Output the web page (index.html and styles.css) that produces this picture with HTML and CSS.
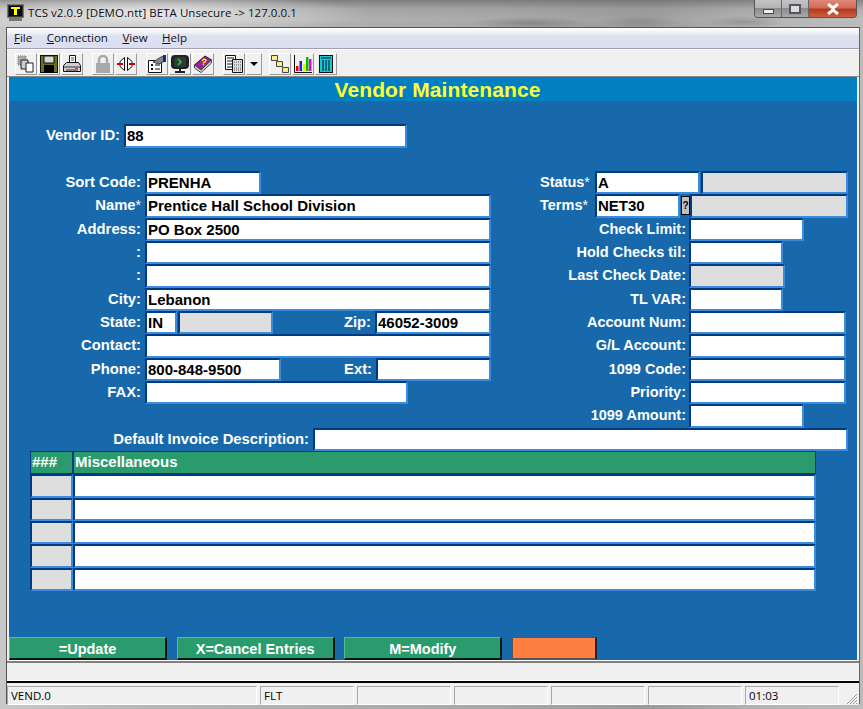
FILE: index.html
```html
<!DOCTYPE html>
<html>
    <head>
        <meta charset="utf-8">
        <title>TCS v2.0.9</title>
        <link rel="stylesheet" href="styles.css">
    </head>
    <body>
        <div class="window">
            <div class="titlebar">
                <svg class="appicon" width="17" height="18" viewBox="0 0 17 18">
                    <rect x="0.5" y="0.5" width="16" height="13" fill="#333" stroke="#777"/>
                    <rect x="2" y="2" width="13" height="10" fill="#000"/>
                    <path d="M4 3h9v2h-3v6H7V5H4z" fill="#ff0"/>
                    <rect x="2" y="14" width="13" height="3" fill="#777"/>
                </svg>
                <span class="apptitle">TCS v2.0.9 [DEMO.ntt] BETA Unsecure -&gt; 127.0.0.1</span>
                <div class="winbtns">
                    <div class="winbtn"><span class="glyph-min"></span></div>
                    <div class="winbtn"><span class="glyph-max"></span></div>
                    <div class="winbtn close">
                        <svg width="14" height="12" viewBox="0 0 14 12"><path d="M2 1l5 4 5-4M2 11l5-4 5 4M7 5v2" fill="none" stroke="#fff" stroke-width="3"/></svg>
                    </div>
                </div>
            </div>
            <div class="client">
                <div class="menubar">
                    <span><u>F</u>ile</span>
                    <span><u>C</u>onnection</span>
                    <span><u>V</u>iew</span>
                    <span><u>H</u>elp</span>
                </div>
                <div class="toolbar">
                    <div class="tool"><svg width="18" height="18" viewBox="0 0 18 18"><path d="M1 1h8v9H1z" fill="#aaa" stroke="#777" stroke-dasharray="1 1"/><path d="M4 5h7v9H4z" fill="#ccc" stroke="#222"/><path d="M9 8h7v9H9z" fill="#fff" stroke="#222"/></svg></div>
                    <div class="tool"><svg width="18" height="18" viewBox="0 0 18 18"><rect x="0.5" y="0.5" width="17" height="17" fill="#6f6f1e" stroke="#111"/><rect x="4" y="1" width="10" height="7" fill="#d8d8d8" stroke="#111"/><rect x="4" y="10" width="10" height="8" fill="#000"/></svg></div>
                    <div class="tool"><svg width="18" height="18" viewBox="0 0 18 18"><path d="M6.5 0.5h6v7h-6z" fill="#fff" stroke="#111"/><path d="M8 3h3M8 5h3" stroke="#555"/><path d="M3.5 7.5h12l2 3v6h-17v-6z" fill="#d0d0d0" stroke="#111"/><path d="M1 12h16M3 15h12" stroke="#333"/><rect x="12" y="13" width="3" height="1" fill="#d33"/></svg></div>
                    <div class="tool sep"><svg width="14" height="18" viewBox="0 0 14 18"><path d="M3 8V5a4 4 0 0 1 8 0v3" fill="none" stroke="#a8a8a8" stroke-width="2.5"/><rect x="0" y="8" width="14" height="10" fill="#a8a8a8"/></svg></div>
                    <div class="tool"><svg width="18" height="14" viewBox="0 0 18 14"><path d="M7.5 0.5L3 4.5v5l4.5 4z" fill="#fff" stroke="#111"/><path d="M10.5 0.5l4.5 4v5l-4.5 4z" fill="#fff" stroke="#111"/><rect x="0" y="6" width="6" height="2" fill="#c00"/><rect x="12" y="6" width="6" height="2" fill="#c00"/></svg></div>
                    <div class="tool sep"><svg width="18" height="18" viewBox="0 0 18 18"><path d="M0.5 5.5h13v12h-13z" fill="#fff" stroke="#111"/><path d="M3 9h2v2H3zM3 13h2v2H3z" fill="#111"/><path d="M7 10h5M7 14h5" stroke="#111"/><path d="M5 7l8-5 4-1v5l-6 3z" fill="#888" stroke="#444"/><rect x="15" y="0" width="3" height="7" fill="#0b2f8a"/></svg></div>
                    <div class="tool"><svg width="18" height="18" viewBox="0 0 18 18"><rect x="0" y="0" width="18" height="14" rx="4" fill="#222"/><rect x="3" y="2" width="12" height="10" rx="2" fill="#2c3a3a"/><path d="M7 4l3 3-3 3" fill="none" stroke="#3c3" stroke-width="1.5"/><path d="M8 14h2v2H8zM4 16h10v2H4z" fill="#222"/></svg></div>
                    <div class="tool"><svg width="18" height="18" viewBox="0 0 18 18"><path d="M0.5 10L11 1l6.5 4L7 15z" fill="#a01fa0" stroke="#311"/><path d="M0.5 10v3l6.5 4.5L17.5 8V5L7 15z" fill="#d8d8d8" stroke="#444"/><path d="M8 6l2-2 2 1-1 2-2 1M9 10l1-1" fill="none" stroke="#ff0" stroke-width="1.3"/></svg></div>
                    <div class="tool sep"><svg width="18" height="18" viewBox="0 0 18 18"><path d="M0.5 0.5h10v14h-10z" fill="#fff" stroke="#111"/><path d="M2 3h7M2 6h7M2 9h7M2 12h7" stroke="#111"/><path d="M7.5 4.5h10v13h-10z" fill="#ddd" stroke="#111"/><path d="M9 7h7M9 10h7M9 13h7M9 15h7" stroke="#555" stroke-dasharray="1 1"/></svg></div>
                    <div class="tool arrow"><span class="caret"></span></div>
                    <div class="tool sep-narrow"><svg width="18" height="18" viewBox="0 0 18 18"><path d="M3 3l12 12" stroke="#111"/><path d="M0.5 0.5h6v5h-6zM5.5 6.5h6v5h-6zM11.5 12.5h6v5h-6z" fill="#ffe98a" stroke="#444"/></svg></div>
                    <div class="tool"><svg width="18" height="18" viewBox="0 0 18 18"><path d="M0.5 0v17.5H18" fill="none" stroke="#111"/><rect x="2" y="11" width="2.5" height="5" fill="#e00"/><rect x="5.5" y="6" width="2.5" height="10" fill="#22c"/><rect x="9" y="9" width="2.5" height="7" fill="#ee0"/><rect x="12" y="2" width="2.5" height="14" fill="#0b0"/><rect x="15" y="4" width="2.5" height="12" fill="#e0e"/></svg></div>
                    <div class="tool"><svg width="14" height="18" viewBox="0 0 14 18"><rect x="0.5" y="0.5" width="13" height="17" fill="#19c8d8" stroke="#111"/><path d="M2 3h10" stroke="#111"/><path d="M4 5v11M7 5v11M10 5v11" stroke="#0a4a55" stroke-width="1.5"/></svg></div>
                </div>
                <div class="screen">
                    <div class="screen-title">Vendor Maintenance</div>
                    <div class="row"></div>
                    <div class="row">
                        <label class="lbl w-vendor">Vendor ID:</label>
                        <div class="fld f283">88</div>
                    </div>
                    <div class="row"></div>
                    <div class="columns">
                        <div class="col-left">
                            <div class="row"><label class="lbl w-left">Sort Code:</label><div class="fld f116">PRENHA</div></div>
                            <div class="row"><label class="lbl w-left">Name<sup>*</sup></label><div class="fld f346">Prentice Hall School Division</div></div>
                            <div class="row"><label class="lbl w-left">Address:</label><div class="fld f346">PO Box 2500</div></div>
                            <div class="row"><label class="lbl w-left">:</label><div class="fld f346"></div></div>
                            <div class="row"><label class="lbl w-left">:</label><div class="fld f346"></div></div>
                            <div class="row"><label class="lbl w-left">City:</label><div class="fld f346">Lebanon</div></div>
                            <div class="row">
                                <label class="lbl w-left">State:</label>
                                <div class="fld f32">IN</div>
                                <div class="fld ro f95 after-gap"></div>
                                <label class="lbl w-zip">Zip:</label>
                                <div class="fld f116">46052-3009</div>
                            </div>
                            <div class="row"><label class="lbl w-left">Contact:</label><div class="fld f346"></div></div>
                            <div class="row">
                                <label class="lbl w-left">Phone:</label>
                                <div class="fld f136">800-848-9500</div>
                                <label class="lbl w-ext">Ext:</label>
                                <div class="fld f115"></div>
                            </div>
                            <div class="row"><label class="lbl w-left">FAX:</label><div class="fld f263"></div></div>
                        </div>
                        <div class="col-right">
                            <div class="row">
                                <label class="lbl w-short">Status<sup>*</sup></label>
                                <div class="fld f105">A</div>
                                <div class="fld ro f147 after-gap"></div>
                            </div>
                            <div class="row">
                                <label class="lbl w-short">Terms<sup>*</sup></label>
                                <div class="fld f85">NET30</div>
                                <div class="lookup">?</div>
                                <div class="fld ro f158"></div>
                            </div>
                            <div class="row"><label class="lbl w-right">Check Limit:</label><div class="fld f115"></div></div>
                            <div class="row"><label class="lbl w-right">Hold Checks til:</label><div class="fld f94"></div></div>
                            <div class="row"><label class="lbl w-right">Last Check Date:</label><div class="fld ro f96"></div></div>
                            <div class="row"><label class="lbl w-right">TL VAR:</label><div class="fld f94"></div></div>
                            <div class="row"><label class="lbl w-right">Account Num:</label><div class="fld f157"></div></div>
                            <div class="row"><label class="lbl w-right">G/L Account:</label><div class="fld f157"></div></div>
                            <div class="row"><label class="lbl w-right">1099 Code:</label><div class="fld f157"></div></div>
                            <div class="row"><label class="lbl w-right">Priority:</label><div class="fld f157"></div></div>
                            <div class="row"><label class="lbl w-right">1099 Amount:</label><div class="fld f115"></div></div>
                        </div>
                    </div>
                    <div class="row">
                        <label class="lbl w-desc">Default Invoice Description:</label>
                        <div class="fld f535"></div>
                    </div>
                    <div class="grid">
                        <div class="row">
                            <div class="head h-num">###</div>
                            <div class="head h-misc">Miscellaneous</div>
                        </div>
                        <div class="row"><div class="fld ro c-num"></div><div class="fld c-misc"></div></div>
                        <div class="row"><div class="fld ro c-num"></div><div class="fld c-misc"></div></div>
                        <div class="row"><div class="fld ro c-num"></div><div class="fld c-misc"></div></div>
                        <div class="row"><div class="fld ro c-num"></div><div class="fld c-misc"></div></div>
                        <div class="row"><div class="fld ro c-num"></div><div class="fld c-misc"></div></div>
                    </div>
                    <div class="actions">
                        <div class="action">=Update</div>
                        <div class="action">X=Cancel Entries</div>
                        <div class="action">M=Modify</div>
                        <div class="action blank"></div>
                    </div>
                </div>
                <div class="message"></div>
                <div class="statusbar">
                    <div class="panel p-wide">VEND.0</div>
                    <div class="panel">FLT</div>
                    <div class="panel"></div>
                    <div class="panel"></div>
                    <div class="panel"></div>
                    <div class="panel"></div>
                    <div class="panel">01:03</div>
                    <svg class="grip" width="12" height="12" viewBox="0 0 12 12"><path d="M11 1L1 11M11 4l-7 7M11 7l-4 4M11 10l-1 1" stroke="#999"/></svg>
                </div>
            </div>
        </div>
    </body>
</html>
```

FILE: styles.css
```css
*{
    margin: 0;
    padding: 0;
    box-sizing: border-box;
}
html,body{
    width: 863px;
    height: 709px;
    overflow: hidden;
}
body{
    font-family: "Liberation Sans", Arial, sans-serif;
    background-color: #a8a8a8;
}
.window{
    width: 863px;
    height: 709px;
    padding: 0 3px 5px 6px;
    display: flex;
    flex-direction: column;
    background:
        radial-gradient(ellipse 60px 6px at 530px 23px, rgba(120,120,120,.7), rgba(120,120,120,0)),
        radial-gradient(ellipse 40px 6px at 640px 22px, rgba(130,130,130,.6), rgba(130,130,130,0)),
        radial-gradient(ellipse 40px 6px at 745px 22px, rgba(130,130,130,.6), rgba(130,130,130,0)),
        radial-gradient(ellipse 220px 22px at 150px 14px, rgba(235,235,235,.95), rgba(235,235,235,0)),
        linear-gradient(180deg, rgba(95,95,95,.6) 0, rgba(150,150,150,.35) 9px, rgba(200,200,200,.1) 20px, rgba(200,200,200,0) 27px),
        linear-gradient(90deg, #c8c8c8 0, #b8b8b8 15%, #aeaeae 40%, #a6a6a6 60%, #9a9a9a 75%, #b4b4b4 88%, #bbb 100%);
}

/* title bar */
.titlebar{
    height: 27px;
    flex: none;
    display: flex;
    align-items: flex-start;
    padding-top: 4px;
    position: relative;
}
.appicon{
    margin-left: 1px;
    flex: none;
}
.apptitle{
    margin-left: 4px;
    font-family: "Open Sans", "Noto Sans", sans-serif;
    font-size: 11.5px;
    line-height: 17px;
    color: #111;
    white-space: nowrap;
    letter-spacing: .05px;
}
.winbtns{
    position: absolute;
    top: 0;
    right: 3px;
    display: flex;
    height: 18px;
    border: 1px solid #555;
    border-top: 0;
    border-radius: 0 0 4px 4px;
    overflow: hidden;
}
.winbtn{
    width: 27px;
    display: flex;
    align-items: center;
    justify-content: center;
    background: linear-gradient(180deg, #c4c4c4 0, #b4b4b4 45%, #8c8c8c 50%, #a8a8a8 100%);
    border-right: 1px solid #666;
}
.winbtn.close{
    width: 47px;
    border-right: 0;
    background: linear-gradient(180deg, #e08878 0, #d06a58 45%, #b83820 55%, #c86040 100%);
}
.glyph-min{
    width: 11px;
    height: 5px;
    margin-top: 6px;
    background-color: #eee;
    border: 1px solid #445;
}
.glyph-max{
    width: 12px;
    height: 10px;
    background-color: #ddd;
    border: 2px solid #556;
}

/* menu + toolbar */
.client{
    flex: 1;
    min-height: 0;
    display: flex;
    flex-direction: column;
    border: 1px solid #555;
    border-bottom: 0;
    border-right-color: #666;
    background-color: #f0f0f0;
}
.menubar{
    height: 21px;
    flex: none;
    display: flex;
    gap: 14.5px;
    padding-left: 7px;
    background: linear-gradient(180deg, #fff 0, #eef0f8 25%, #dde1f0 40%, #dadeef 100%);
    border-bottom: 1px solid #a0a0b0;
    font-family: "Open Sans", "Noto Sans", sans-serif;
    font-size: 11.5px;
    line-height: 19px;
    color: #111;
}
.toolbar{
    height: 28px;
    flex: none;
    display: flex;
    padding: 3px 0 0 8px;
    gap: 1px;
    border-top: 1px solid #fff;
    background-color: #f0f0f0;
    border-bottom: 1px solid #888;
}
.tool{
    width: 22px;
    height: 22px;
    display: flex;
    align-items: center;
    justify-content: center;
    background-color: #f0f0f0;
    border: 1px solid;
    border-color: #fff #999 #999 #fff;
}
.tool svg{
    flex: none;
}
.tool.sep{
    margin-left: 8px;
}
.tool.sep-narrow{
    margin-left: 6px;
}
.tool.arrow{
    width: 16px;
}
.caret{
    border-top: 4px solid #000;
    border-left: 4px solid transparent;
    border-right: 4px solid transparent;
}

/* screen */
.screen{
    height: 584px;
    flex: none;
    margin: 0 2px 0 2px;
    background-color: #1769ac;
    display: flex;
    flex-direction: column;
    border-bottom: 1px solid #fff;
}
.screen-title{
    height: 24px;
    flex: none;
    background-color: #0080c0;
    color: #ffff33;
    font-weight: bold;
    font-size: 21px;
    line-height: 25px;
    text-align: center;
    padding-left: 9px;
    letter-spacing: .1px;
}
.row{
    display: flex;
    height: 23.33px;
    flex: none;
}
.columns{
    display: flex;
    height: 256.67px;
    flex: none;
}
.col-left{
    width: 531px;
    flex: none;
}
.lbl{
    flex: none;
    color: #fff;
    font-weight: bold;
    font-size: 14.8px;
    line-height: 22px;
    text-align: right;
    padding-right: 4px;
    white-space: nowrap;
}
.col-right .lbl{
    font-size: 14.5px;
    padding-right: 3px;
}
.lbl sup{
    font-size: 14px;
    font-weight: normal;
    vertical-align: baseline;
}
.w-vendor{ width: 115px; }
.w-left{ width: 136px; }
.w-zip{ width: 102px; }
.w-ext{ width: 95px; }
.col-right .w-short{ width: 55px; padding-right: 0; text-align: left; }
.w-right{ width: 149px; }
.w-desc{ width: 304px; }

.fld{
    flex: none;
    height: 100%;
    background-color: #fff;
    border: 2px solid;
    border-color: #003a80 #3a8cdc #3a8cdc #003a80;
    color: #000;
    font-weight: bold;
    font-size: 15px;
    line-height: 19px;
    padding-left: 1px;
    white-space: nowrap;
    overflow: hidden;
}
.fld.ro{
    background-color: #dedede;
}
.after-gap{ margin-left: 1px; }
.f32{ width: 32px; }
.f85{ width: 85px; }
.f94{ width: 94px; }
.f95{ width: 95px; }
.f96{ width: 96px; }
.f105{ width: 105px; }
.f115{ width: 115px; }
.f116{ width: 116px; }
.f136{ width: 136px; }
.f147{ width: 147px; }
.f157{ width: 157px; }
.f158{ width: 158px; }
.f263{ width: 263px; }
.f283{ width: 283px; }
.f346{ width: 346px; }
.f535{ width: 535px; }
.lookup{
    flex: none;
    width: 9px;
    height: 19px;
    margin: 2px 0 0 1px;
    background-color: #c0c0c0;
    border: 1px solid #000;
    font-weight: bold;
    font-size: 10px;
    line-height: 17px;
    text-align: center;
    overflow: hidden;
}

/* table */
.grid{
    padding-left: 21px;
    flex: none;
}
.head{
    flex: none;
    height: 100%;
    background-color: #2a9b6d;
    border: 1px solid #003a80;
    color: #fff;
    font-weight: bold;
    font-size: 15px;
    line-height: 19px;
    padding-left: 1px;
}
.h-num{ width: 43px; }
.h-misc{ width: 743px; }
.c-num{ width: 43px; }
.c-misc{ width: 743px; }

/* bottom buttons */
.actions{
    display: flex;
    margin-top: auto;
}
.action{
    flex: none;
    width: 158px;
    height: 23px;
    margin-right: 9.67px;
    background-color: #2a9b6d;
    border: 1px solid;
    border-width: 1px 2px 2px 1px;
    border-color: #4fc090 #001810 #001810 #4fc090;
    color: #fff;
    font-weight: bold;
    font-size: 14.5px;
    line-height: 22px;
    text-align: center;
}
.action.blank{
    width: 85px;
    margin-right: 0;
    background-color: #ff7f40;
    border-color: #555 #223 #555 #555;
}

/* bottom bars */
.message{
    height: 20px;
    flex: none;
    background-color: #f0f0f0;
    border-top: 2px solid #808080;
    border-bottom: 1px solid #fff;
}
.statusbar{
    height: 24px;
    flex: none;
    display: flex;
    gap: 3px;
    padding-top: 3px;
    border-top: 2px solid #000;
    background-color: #f0f0f0;
    position: relative;
}
.panel{
    flex: none;
    width: 94px;
    height: 19px;
    border: 1px solid;
    border-color: #a8a8a8 #fff #fff #a8a8a8;
    font-family: "Open Sans", "Noto Sans", sans-serif;
    font-size: 11.5px;
    line-height: 17px;
    padding-left: 3px;
    color: #000;
}
.panel.p-wide{
    width: 250px;
}
.grip{
    position: absolute;
    right: 1px;
    bottom: 0;
}
```
